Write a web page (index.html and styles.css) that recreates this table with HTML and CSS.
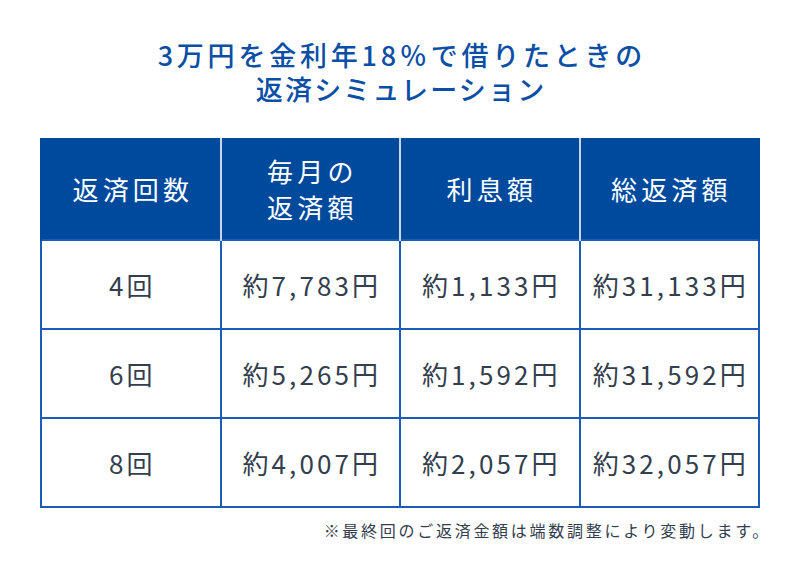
FILE: index.html
```html
<!DOCTYPE html>
<html lang="ja">
<head>
<meta charset="utf-8">
<link rel="stylesheet" href="styles.css">
</head>
<body>
<main class="page">
  <h1 class="title"><span class="title-l1">3万円を金利年18％で借りたときの</span><span class="title-l2">返済シミュレーション</span></h1>
  <table class="sim">
    <thead>
      <tr>
        <th>返済回数</th>
        <th>毎月の<br>返済額</th>
        <th>利息額</th>
        <th>総返済額</th>
      </tr>
    </thead>
    <tbody>
      <tr><td>4回</td><td>約7,783円</td><td>約1,133円</td><td>約31,133円</td></tr>
      <tr><td>6回</td><td>約5,265円</td><td>約1,592円</td><td>約31,592円</td></tr>
      <tr><td>8回</td><td>約4,007円</td><td>約2,057円</td><td>約32,057円</td></tr>
    </tbody>
  </table>
  <p class="note">※最終回のご返済金額は端数調整により変動します。</p>
</main>
</body>
</html>
```
FILE: styles.css
```css
* { box-sizing: border-box; }
html, body { margin: 0; padding: 0; background: #fff; }
body {
  font-family: "Noto Sans CJK JP", "Noto Sans", sans-serif;
  color: #333e4e;
}
.page {
  width: 800px;
  padding: 38px 40px 0;
}
.title {
  margin: 0;
  text-align: center;
  font-size: 27px;
  line-height: 34px;
  font-weight: 500;
  color: #0b4ea5;
}
.title-l1 {
  display: block;
  letter-spacing: 0.14em;
  padding-left: 0.14em;
}
.title-l2 {
  display: block;
  letter-spacing: 0.08em;
  padding-left: 0.08em;
}
.sim {
  margin-top: 32px;
  width: 720px;
  border-collapse: collapse;
  table-layout: fixed;
}
.sim th {
  height: 102px;
  background: #004a9e;
  color: #fff;
  font-size: 26px;
  line-height: 36px;
  font-weight: 400;
  letter-spacing: 0.16em;
  text-align: center;
  border-left: 2px solid #c9d6ea;
  padding: 0 0 0 0.16em;
}
.sim th:first-child { border-left: 2px solid #004a9e; }
.sim th:last-child { border-right: 2px solid #004a9e; }
.sim td {
  height: 89px;
  border: 2px solid #1d5cb6;
  text-align: center;
  font-size: 26px;
  letter-spacing: 0.12em;
  padding: 0 0 0 0.12em;
}
.note {
  margin: 10px -11px 0 0;
  text-align: right;
  font-size: 16px;
  line-height: 24px;
  letter-spacing: 0.17em;
  color: #333e4e;
}
```
